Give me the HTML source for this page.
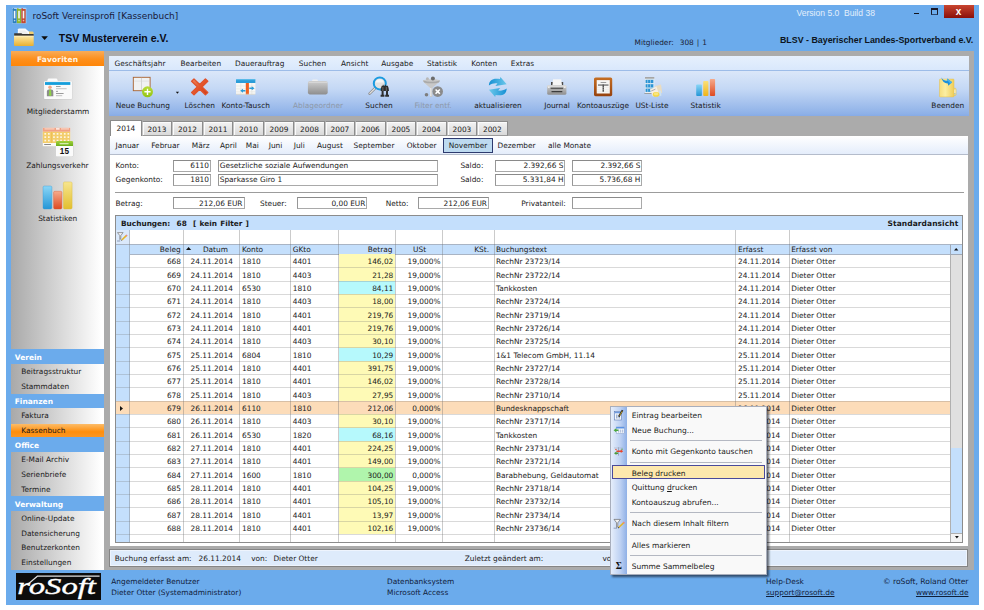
<!DOCTYPE html>
<html lang="de"><head><meta charset="utf-8"><title>roSoft Vereinsprofi [Kassenbuch]</title>
<style>
html,body{margin:0;padding:0;background:#fff;}
body{width:984px;height:610px;position:relative;overflow:hidden;font-family:"DejaVu Sans","Liberation Sans",sans-serif;font-size:7.4px;color:#1a1a1a;}
div{position:absolute;box-sizing:border-box;white-space:nowrap;}
.t{font-size:7.4px;}
.b{font-size:7.5px;font-weight:bold;}
.w{color:#fff;}
.dis{color:#8d98a8;}
svg{position:absolute;overflow:visible;}
u{text-decoration:underline;}
</style></head><body>

<div style="left:6px;top:5px;width:973px;height:600px;background:#6babec;"></div>
<div style="left:104px;top:51px;width:870px;height:519px;background:#ababab;"></div>
<div class="t" style="left:32.5px;top:9px;height:14px;line-height:14px;font-size:8.95px;color:#1a1a3a;">roSoft Vereinsprofi [Kassenbuch]</div>
<div class="t" style="left:796.5px;top:6px;height:14px;line-height:14px;color:#e4effb;font-size:8.56px;font-family:'Liberation Sans',sans-serif;">Version 5.0&nbsp; Build 38</div>
<div style="left:914px;top:12.5px;width:5px;height:1.6px;background:#14141e;"></div>
<div style="left:931px;top:8px;width:7px;height:7px;border:1px solid #1a1a2a;border-top-width:2px;border-bottom-color:#2c4870;"></div>
<div style="left:944px;top:5px;width:30px;height:13px;background:linear-gradient(#c9452f,#8a0f0a);"></div>
<div class="t" style="left:808.6px;width:300px;text-align:center;top:4.5px;height:14px;line-height:14px;color:#fff;font-weight:bold;font-size:10px;font-family:'Liberation Sans',sans-serif;">x</div>
<div class="t" style="left:58.7px;top:30px;height:16px;line-height:16px;font-family:'Liberation Sans',sans-serif;font-weight:bold;font-size:10.56px;color:#0a0a14;">TSV Musterverein e.V.</div>
<div class="t" style="left:634.5px;top:36px;height:13px;line-height:13px;color:#1a2236;word-spacing:0.6px;">Mitglieder:&nbsp; 308 | 1</div>
<div class="t" style="right:10.700000000000045px;text-align:right;top:33px;height:14px;line-height:14px;font-family:'Liberation Sans',sans-serif;font-weight:bold;font-size:8.85px;color:#0c1420;">BLSV - Bayerischer Landes-Sportverband e.V.</div>
<div style="left:11px;top:51px;width:93px;height:519px;background:linear-gradient(90deg,#a9a9a9,#ffffff 97%);"></div>
<div style="left:11px;top:51px;width:93px;height:14.5px;background:linear-gradient(#f9ac58,#fd8f1c 55%,#ff8608);"></div>
<div class="b w" style="left:-92.4px;width:300px;text-align:center;top:53px;height:13px;line-height:13px;color:#fff5e6;letter-spacing:0.15px;">Favoriten</div>
<div class="t" style="left:-92px;width:300px;text-align:center;top:105px;height:13px;line-height:13px;">Mitgliederstamm</div>
<div class="t" style="left:-92.6px;width:300px;text-align:center;top:159px;height:13px;line-height:13px;">Zahlungsverkehr</div>
<div class="t" style="left:-92.3px;width:300px;text-align:center;top:212px;height:13px;line-height:13px;">Statistiken</div>
<div style="left:11px;top:349.4px;width:93px;height:14.7px;background:#6babec;"></div>
<div class="b w" style="left:14.75px;top:351px;height:13px;line-height:13px;">Verein</div>
<div class="t" style="left:21.25px;top:365px;height:13px;line-height:13px;">Beitragsstruktur</div>
<div class="t" style="left:21.25px;top:380px;height:13px;line-height:13px;">Stammdaten</div>
<div style="left:11px;top:394.0px;width:93px;height:14.1px;background:#6babec;"></div>
<div class="b w" style="left:14.75px;top:395px;height:13px;line-height:13px;">Finanzen</div>
<div class="t" style="left:21.25px;top:409px;height:13px;line-height:13px;">Faktura</div>
<div style="left:11px;top:423.75px;width:93px;height:13.35px;background:linear-gradient(#fcbc68,#ff8e0c 60%,#fb9622);"></div>
<div class="t" style="left:21.25px;top:424px;height:13px;line-height:13px;">Kassenbuch</div>
<div style="left:11px;top:437.1px;width:93px;height:15.0px;background:#6babec;"></div>
<div class="b w" style="left:14.75px;top:439px;height:13px;line-height:13px;">Office</div>
<div class="t" style="left:21.25px;top:453px;height:13px;line-height:13px;">E-Mail Archiv</div>
<div class="t" style="left:21.25px;top:468px;height:13px;line-height:13px;">Serienbriefe</div>
<div class="t" style="left:21.25px;top:483px;height:13px;line-height:13px;">Termine</div>
<div style="left:11px;top:496.0px;width:93px;height:14.9px;background:#6babec;"></div>
<div class="b w" style="left:14.75px;top:498px;height:13px;line-height:13px;">Verwaltung</div>
<div class="t" style="left:21.25px;top:512px;height:13px;line-height:13px;">Online-Update</div>
<div class="t" style="left:21.25px;top:527px;height:13px;line-height:13px;">Datensicherung</div>
<div class="t" style="left:21.25px;top:541px;height:13px;line-height:13px;">Benutzerkonten</div>
<div class="t" style="left:21.25px;top:556px;height:13px;line-height:13px;">Einstellungen</div>
<div style="left:109px;top:55.5px;width:860px;height:15.5px;background:linear-gradient(#e6f0fd,#d9e8fc);border-bottom:1px solid #9dbce8;"></div>
<div class="t" style="left:114.5px;top:57px;height:13px;line-height:13px;">Geschäftsjahr</div>
<div class="t" style="left:180.5px;top:57px;height:13px;line-height:13px;">Bearbeiten</div>
<div class="t" style="left:235px;top:57px;height:13px;line-height:13px;">Dauerauftrag</div>
<div class="t" style="left:298.75px;top:57px;height:13px;line-height:13px;">Suchen</div>
<div class="t" style="left:341px;top:57px;height:13px;line-height:13px;">Ansicht</div>
<div class="t" style="left:381.25px;top:57px;height:13px;line-height:13px;">Ausgabe</div>
<div class="t" style="left:427px;top:57px;height:13px;line-height:13px;">Statistik</div>
<div class="t" style="left:471.25px;top:57px;height:13px;line-height:13px;">Konten</div>
<div class="t" style="left:510.75px;top:57px;height:13px;line-height:13px;">Extras</div>
<div style="left:109px;top:71px;width:860px;height:44.7px;background:linear-gradient(#dbe7f9,#c4d8f5 40%,#8eb1e8 95%,#86abe6);"></div>
<div class="t" style="left:-7.25px;width:300px;text-align:center;top:99px;height:13px;line-height:13px;">Neue Buchung</div>
<div class="t" style="left:49.75px;width:300px;text-align:center;top:99px;height:13px;line-height:13px;">Löschen</div>
<div class="t" style="left:95.75px;width:300px;text-align:center;top:99px;height:13px;line-height:13px;">Konto-Tausch</div>
<div class="t dis" style="left:168px;width:300px;text-align:center;top:99px;height:13px;line-height:13px;">Ablageordner</div>
<div class="t" style="left:229px;width:300px;text-align:center;top:99px;height:13px;line-height:13px;">Suchen</div>
<div class="t dis" style="left:283px;width:300px;text-align:center;top:99px;height:13px;line-height:13px;">Filter entf.</div>
<div class="t" style="left:348px;width:300px;text-align:center;top:99px;height:13px;line-height:13px;">aktualisieren</div>
<div class="t" style="left:407px;width:300px;text-align:center;top:99px;height:13px;line-height:13px;">Journal</div>
<div class="t" style="left:453px;width:300px;text-align:center;top:99px;height:13px;line-height:13px;">Kontoauszüge</div>
<div class="t" style="left:502px;width:300px;text-align:center;top:99px;height:13px;line-height:13px;">USt-Liste</div>
<div class="t" style="left:555.6px;width:300px;text-align:center;top:99px;height:13px;line-height:13px;">Statistik</div>
<div class="t" style="left:797.75px;width:300px;text-align:center;top:99px;height:13px;line-height:13px;">Beenden</div>
<div style="left:110px;top:135.5px;width:858px;height:410.5px;background:#fff;"></div>
<div style="left:110px;top:120px;width:32px;height:16.5px;background:#fff;border:1px solid #8a8a8a;border-bottom:none;border-radius:1px 1px 0 0;"></div>
<div class="t" style="left:-24.099999999999994px;width:300px;text-align:center;top:122px;height:13px;line-height:13px;">2014</div>
<div style="left:141.75px;top:121px;width:30.49px;height:14.5px;background:linear-gradient(#f3f3f3,#d9d9d9);border:1px solid #8c8c8c;border-left-color:#c4c4c4;border-bottom-color:#9a9a9a;box-shadow:inset 1px 1px 0 #fbfbfb;"></div>
<div class="t" style="left:6.9950000000000045px;width:300px;text-align:center;top:123px;height:13px;line-height:13px;">2013</div>
<div style="left:172.24px;top:121px;width:30.49px;height:14.5px;background:linear-gradient(#f3f3f3,#d9d9d9);border:1px solid #8c8c8c;border-left-color:#c4c4c4;border-bottom-color:#9a9a9a;box-shadow:inset 1px 1px 0 #fbfbfb;"></div>
<div class="t" style="left:37.485000000000014px;width:300px;text-align:center;top:123px;height:13px;line-height:13px;">2012</div>
<div style="left:202.73px;top:121px;width:30.49px;height:14.5px;background:linear-gradient(#f3f3f3,#d9d9d9);border:1px solid #8c8c8c;border-left-color:#c4c4c4;border-bottom-color:#9a9a9a;box-shadow:inset 1px 1px 0 #fbfbfb;"></div>
<div class="t" style="left:67.975px;width:300px;text-align:center;top:123px;height:13px;line-height:13px;">2011</div>
<div style="left:233.22px;top:121px;width:30.49px;height:14.5px;background:linear-gradient(#f3f3f3,#d9d9d9);border:1px solid #8c8c8c;border-left-color:#c4c4c4;border-bottom-color:#9a9a9a;box-shadow:inset 1px 1px 0 #fbfbfb;"></div>
<div class="t" style="left:98.46499999999997px;width:300px;text-align:center;top:123px;height:13px;line-height:13px;">2010</div>
<div style="left:263.71px;top:121px;width:30.49px;height:14.5px;background:linear-gradient(#f3f3f3,#d9d9d9);border:1px solid #8c8c8c;border-left-color:#c4c4c4;border-bottom-color:#9a9a9a;box-shadow:inset 1px 1px 0 #fbfbfb;"></div>
<div class="t" style="left:128.95499999999998px;width:300px;text-align:center;top:123px;height:13px;line-height:13px;">2009</div>
<div style="left:294.2px;top:121px;width:30.49px;height:14.5px;background:linear-gradient(#f3f3f3,#d9d9d9);border:1px solid #8c8c8c;border-left-color:#c4c4c4;border-bottom-color:#9a9a9a;box-shadow:inset 1px 1px 0 #fbfbfb;"></div>
<div class="t" style="left:159.445px;width:300px;text-align:center;top:123px;height:13px;line-height:13px;">2008</div>
<div style="left:324.69px;top:121px;width:30.49px;height:14.5px;background:linear-gradient(#f3f3f3,#d9d9d9);border:1px solid #8c8c8c;border-left-color:#c4c4c4;border-bottom-color:#9a9a9a;box-shadow:inset 1px 1px 0 #fbfbfb;"></div>
<div class="t" style="left:189.935px;width:300px;text-align:center;top:123px;height:13px;line-height:13px;">2007</div>
<div style="left:355.18px;top:121px;width:30.49px;height:14.5px;background:linear-gradient(#f3f3f3,#d9d9d9);border:1px solid #8c8c8c;border-left-color:#c4c4c4;border-bottom-color:#9a9a9a;box-shadow:inset 1px 1px 0 #fbfbfb;"></div>
<div class="t" style="left:220.425px;width:300px;text-align:center;top:123px;height:13px;line-height:13px;">2006</div>
<div style="left:385.67px;top:121px;width:30.49px;height:14.5px;background:linear-gradient(#f3f3f3,#d9d9d9);border:1px solid #8c8c8c;border-left-color:#c4c4c4;border-bottom-color:#9a9a9a;box-shadow:inset 1px 1px 0 #fbfbfb;"></div>
<div class="t" style="left:250.91500000000002px;width:300px;text-align:center;top:123px;height:13px;line-height:13px;">2005</div>
<div style="left:416.16px;top:121px;width:30.49px;height:14.5px;background:linear-gradient(#f3f3f3,#d9d9d9);border:1px solid #8c8c8c;border-left-color:#c4c4c4;border-bottom-color:#9a9a9a;box-shadow:inset 1px 1px 0 #fbfbfb;"></div>
<div class="t" style="left:281.405px;width:300px;text-align:center;top:123px;height:13px;line-height:13px;">2004</div>
<div style="left:446.65px;top:121px;width:30.49px;height:14.5px;background:linear-gradient(#f3f3f3,#d9d9d9);border:1px solid #8c8c8c;border-left-color:#c4c4c4;border-bottom-color:#9a9a9a;box-shadow:inset 1px 1px 0 #fbfbfb;"></div>
<div class="t" style="left:311.895px;width:300px;text-align:center;top:123px;height:13px;line-height:13px;">2003</div>
<div style="left:477.14px;top:121px;width:30.49px;height:14.5px;background:linear-gradient(#f3f3f3,#d9d9d9);border:1px solid #8c8c8c;border-left-color:#c4c4c4;border-bottom-color:#9a9a9a;box-shadow:inset 1px 1px 0 #fbfbfb;"></div>
<div class="t" style="left:342.385px;width:300px;text-align:center;top:123px;height:13px;line-height:13px;">2002</div>
<div style="left:110px;top:135.5px;width:858px;height:19.5px;background:linear-gradient(#ffffff,#e4edfb);border-bottom:1px solid #b4bccb;"></div>
<div style="left:443px;top:137.5px;width:50px;height:15.5px;background:#bddaf0;border:1px solid #2d3a6e;"></div>
<div class="t" style="left:115.5px;top:139px;height:13px;line-height:13px;">Januar</div>
<div class="t" style="left:151.25px;top:139px;height:13px;line-height:13px;">Februar</div>
<div class="t" style="left:191.75px;top:139px;height:13px;line-height:13px;">März</div>
<div class="t" style="left:220px;top:139px;height:13px;line-height:13px;">April</div>
<div class="t" style="left:245.75px;top:139px;height:13px;line-height:13px;">Mai</div>
<div class="t" style="left:268.75px;top:139px;height:13px;line-height:13px;">Juni</div>
<div class="t" style="left:293.75px;top:139px;height:13px;line-height:13px;">Juli</div>
<div class="t" style="left:317px;top:139px;height:13px;line-height:13px;">August</div>
<div class="t" style="left:353.6px;top:139px;height:13px;line-height:13px;">September</div>
<div class="t" style="left:406.7px;top:139px;height:13px;line-height:13px;">Oktober</div>
<div class="t" style="left:448.8px;top:139px;height:13px;line-height:13px;">November</div>
<div class="t" style="left:497.5px;top:139px;height:13px;line-height:13px;">Dezember</div>
<div class="t" style="left:547.9px;top:139px;height:13px;line-height:13px;">alle Monate</div>
<div class="t" style="left:115.5px;top:159px;height:13px;line-height:13px;">Konto:</div>
<div class="t" style="left:115.5px;top:173px;height:13px;line-height:13px;">Gegenkonto:</div>
<div style="left:173px;top:160px;width:38px;height:12px;background:#fff;border:1px solid #a9a9a9;border-top-color:#8a8a8a;border-left-color:#979797;"></div>
<div class="t" style="right:775px;text-align:right;top:159px;height:13px;line-height:13px;">6110</div>
<div style="left:217.5px;top:160px;width:220.0px;height:12px;background:#fff;border:1px solid #a9a9a9;border-top-color:#8a8a8a;border-left-color:#979797;"></div>
<div class="t" style="left:219.7px;top:159px;height:13px;line-height:13px;">Gesetzliche soziale Aufwendungen</div>
<div style="left:173px;top:174px;width:38px;height:12px;background:#fff;border:1px solid #a9a9a9;border-top-color:#8a8a8a;border-left-color:#979797;"></div>
<div class="t" style="right:775px;text-align:right;top:173px;height:13px;line-height:13px;">1810</div>
<div style="left:217.5px;top:174px;width:220.0px;height:12px;background:#fff;border:1px solid #a9a9a9;border-top-color:#8a8a8a;border-left-color:#979797;"></div>
<div class="t" style="left:219.7px;top:173px;height:13px;line-height:13px;">Sparkasse Giro 1</div>
<div class="t" style="left:460.4px;top:159px;height:13px;line-height:13px;">Saldo:</div>
<div class="t" style="left:460.4px;top:173px;height:13px;line-height:13px;">Saldo:</div>
<div style="left:495.4px;top:160px;width:70.10000000000002px;height:12px;background:#fff;border:1px solid #a9a9a9;border-top-color:#8a8a8a;border-left-color:#979797;"></div>
<div class="t" style="right:420.5px;text-align:right;top:159px;height:13px;line-height:13px;">2.392,66 S</div>
<div style="left:572.3px;top:160px;width:70.10000000000002px;height:12px;background:#fff;border:1px solid #a9a9a9;border-top-color:#8a8a8a;border-left-color:#979797;"></div>
<div class="t" style="right:343.6px;text-align:right;top:159px;height:13px;line-height:13px;">2.392,66 S</div>
<div style="left:495.4px;top:174px;width:70.10000000000002px;height:12px;background:#fff;border:1px solid #a9a9a9;border-top-color:#8a8a8a;border-left-color:#979797;"></div>
<div class="t" style="right:420.5px;text-align:right;top:173px;height:13px;line-height:13px;">5.331,84 H</div>
<div style="left:572.3px;top:174px;width:70.10000000000002px;height:12px;background:#fff;border:1px solid #a9a9a9;border-top-color:#8a8a8a;border-left-color:#979797;"></div>
<div class="t" style="right:343.6px;text-align:right;top:173px;height:13px;line-height:13px;">5.736,68 H</div>
<div style="left:115px;top:192px;width:848.5px;height:1px;background:#9c9c9c;"></div>
<div class="t" style="left:115.5px;top:197px;height:13px;line-height:13px;">Betrag:</div>
<div style="left:173px;top:197px;width:71.5px;height:12px;background:#fff;border:1px solid #a9a9a9;border-top-color:#8a8a8a;border-left-color:#979797;"></div>
<div class="t" style="right:741.5px;text-align:right;top:197px;height:13px;line-height:13px;">212,06 EUR</div>
<div class="t" style="left:260px;top:197px;height:13px;line-height:13px;">Steuer:</div>
<div style="left:297.3px;top:197px;width:70.09999999999997px;height:12px;background:#fff;border:1px solid #a9a9a9;border-top-color:#8a8a8a;border-left-color:#979797;"></div>
<div class="t" style="right:618.6px;text-align:right;top:197px;height:13px;line-height:13px;">0,00 EUR</div>
<div class="t" style="left:385.7px;top:197px;height:13px;line-height:13px;">Netto:</div>
<div style="left:418.3px;top:197px;width:70.69999999999999px;height:12px;background:#fff;border:1px solid #a9a9a9;border-top-color:#8a8a8a;border-left-color:#979797;"></div>
<div class="t" style="right:497px;text-align:right;top:197px;height:13px;line-height:13px;">212,06 EUR</div>
<div class="t" style="left:521.3px;top:197px;height:13px;line-height:13px;">Privatanteil:</div>
<div style="left:572.3px;top:197px;width:70.10000000000002px;height:12px;background:#fff;border:1px solid #a9a9a9;border-top-color:#8a8a8a;border-left-color:#979797;"></div>
<div style="left:115px;top:215px;width:848px;height:328px;background:#fff;border:1px solid #8c8c8c;"></div>
<div style="left:116px;top:216px;width:846px;height:13.5px;background:#c4dffc;"></div>
<div class="b" style="left:121px;top:217px;height:13px;line-height:13px;word-spacing:0.6px;font-size:7.35px;">Buchungen:&nbsp; 68&nbsp; [ kein Filter ]</div>
<div class="b" style="right:25.700000000000045px;text-align:right;top:217px;height:13px;line-height:13px;letter-spacing:0.07px;">Standardansicht</div>
<div style="left:116px;top:229.75px;width:13.5px;height:13.75px;background:#dbe9fb;"></div>
<div style="left:116px;top:243.5px;width:846px;height:11px;background:#c4dffc;border-top:1px solid #a9b4c4;border-bottom:1px solid #a9b4c4;"></div>
<div style="left:116px;top:254.4px;width:13.5px;height:287.6px;background:#c4dffc;"></div>
<div class="t" style="right:803.3px;text-align:right;top:243px;height:13px;line-height:13px;">Beleg</div>
<div class="t" style="left:65.4px;width:300px;text-align:center;top:243px;height:13px;line-height:13px;">Datum</div>
<svg style="left:185.8px;top:247.4px" width="5.2" height="3"><path d="M0 3H5.2L2.6 0Z" fill="#111"/></svg>
<div class="t" style="left:242px;top:243px;height:13px;line-height:13px;">Konto</div>
<div class="t" style="left:292.7px;top:243px;height:13px;line-height:13px;">GKto</div>
<div class="t" style="right:591.6px;text-align:right;top:243px;height:13px;line-height:13px;">Betrag</div>
<div class="t" style="left:269.6px;width:300px;text-align:center;top:243px;height:13px;line-height:13px;">USt</div>
<div class="t" style="right:495px;text-align:right;top:243px;height:13px;line-height:13px;">KSt.</div>
<div class="t" style="left:495.9px;top:243px;height:13px;line-height:13px;">Buchungstext</div>
<div class="t" style="left:738px;top:243px;height:13px;line-height:13px;">Erfasst</div>
<div class="t" style="left:791.2px;top:243px;height:13px;line-height:13px;">Erfasst von</div>
<div style="left:338.75px;top:254.4px;width:56.25px;height:13.335px;background:#fefab6;"></div>
<div class="t" style="right:803px;text-align:right;top:255px;height:13px;line-height:13px;">668</div>
<div class="t" style="left:61.75px;width:300px;text-align:center;top:255px;height:13px;line-height:13px;">24.11.2014</div>
<div class="t" style="left:242px;top:255px;height:13px;line-height:13px;">1810</div>
<div class="t" style="left:292.7px;top:255px;height:13px;line-height:13px;">4401</div>
<div class="t" style="right:590.7px;text-align:right;top:255px;height:13px;line-height:13px;">146,02</div>
<div class="t" style="right:543.6px;text-align:right;top:255px;height:13px;line-height:13px;">19,000%</div>
<div class="t" style="left:495.9px;top:255px;height:13px;line-height:13px;">RechNr 23723/14</div>
<div class="t" style="left:738px;top:255px;height:13px;line-height:13px;">24.11.2014</div>
<div class="t" style="left:791.2px;top:255px;height:13px;line-height:13px;">Dieter Otter</div>
<div style="left:338.75px;top:267.74px;width:56.25px;height:13.335px;background:#fefab6;"></div>
<div class="t" style="right:803px;text-align:right;top:269px;height:13px;line-height:13px;">669</div>
<div class="t" style="left:61.75px;width:300px;text-align:center;top:269px;height:13px;line-height:13px;">24.11.2014</div>
<div class="t" style="left:242px;top:269px;height:13px;line-height:13px;">1810</div>
<div class="t" style="left:292.7px;top:269px;height:13px;line-height:13px;">4403</div>
<div class="t" style="right:590.7px;text-align:right;top:269px;height:13px;line-height:13px;">21,28</div>
<div class="t" style="right:543.6px;text-align:right;top:269px;height:13px;line-height:13px;">19,000%</div>
<div class="t" style="left:495.9px;top:269px;height:13px;line-height:13px;">RechNr 23722/14</div>
<div class="t" style="left:738px;top:269px;height:13px;line-height:13px;">24.11.2014</div>
<div class="t" style="left:791.2px;top:269px;height:13px;line-height:13px;">Dieter Otter</div>
<div style="left:338.75px;top:281.07px;width:56.25px;height:13.335px;background:#b6f9fc;"></div>
<div class="t" style="right:803px;text-align:right;top:282px;height:13px;line-height:13px;">670</div>
<div class="t" style="left:61.75px;width:300px;text-align:center;top:282px;height:13px;line-height:13px;">24.11.2014</div>
<div class="t" style="left:242px;top:282px;height:13px;line-height:13px;">6530</div>
<div class="t" style="left:292.7px;top:282px;height:13px;line-height:13px;">1810</div>
<div class="t" style="right:590.7px;text-align:right;top:282px;height:13px;line-height:13px;">84,11</div>
<div class="t" style="right:543.6px;text-align:right;top:282px;height:13px;line-height:13px;">19,000%</div>
<div class="t" style="left:495.9px;top:282px;height:13px;line-height:13px;">Tankkosten</div>
<div class="t" style="left:738px;top:282px;height:13px;line-height:13px;">24.11.2014</div>
<div class="t" style="left:791.2px;top:282px;height:13px;line-height:13px;">Dieter Otter</div>
<div style="left:338.75px;top:294.41px;width:56.25px;height:13.335px;background:#fefab6;"></div>
<div class="t" style="right:803px;text-align:right;top:295px;height:13px;line-height:13px;">671</div>
<div class="t" style="left:61.75px;width:300px;text-align:center;top:295px;height:13px;line-height:13px;">24.11.2014</div>
<div class="t" style="left:242px;top:295px;height:13px;line-height:13px;">1810</div>
<div class="t" style="left:292.7px;top:295px;height:13px;line-height:13px;">4403</div>
<div class="t" style="right:590.7px;text-align:right;top:295px;height:13px;line-height:13px;">18,00</div>
<div class="t" style="right:543.6px;text-align:right;top:295px;height:13px;line-height:13px;">19,000%</div>
<div class="t" style="left:495.9px;top:295px;height:13px;line-height:13px;">RechNr 23724/14</div>
<div class="t" style="left:738px;top:295px;height:13px;line-height:13px;">24.11.2014</div>
<div class="t" style="left:791.2px;top:295px;height:13px;line-height:13px;">Dieter Otter</div>
<div style="left:338.75px;top:307.74px;width:56.25px;height:13.335px;background:#fefab6;"></div>
<div class="t" style="right:803px;text-align:right;top:309px;height:13px;line-height:13px;">672</div>
<div class="t" style="left:61.75px;width:300px;text-align:center;top:309px;height:13px;line-height:13px;">24.11.2014</div>
<div class="t" style="left:242px;top:309px;height:13px;line-height:13px;">1810</div>
<div class="t" style="left:292.7px;top:309px;height:13px;line-height:13px;">4401</div>
<div class="t" style="right:590.7px;text-align:right;top:309px;height:13px;line-height:13px;">219,76</div>
<div class="t" style="right:543.6px;text-align:right;top:309px;height:13px;line-height:13px;">19,000%</div>
<div class="t" style="left:495.9px;top:309px;height:13px;line-height:13px;">RechNr 23719/14</div>
<div class="t" style="left:738px;top:309px;height:13px;line-height:13px;">24.11.2014</div>
<div class="t" style="left:791.2px;top:309px;height:13px;line-height:13px;">Dieter Otter</div>
<div style="left:338.75px;top:321.08px;width:56.25px;height:13.335px;background:#fefab6;"></div>
<div class="t" style="right:803px;text-align:right;top:322px;height:13px;line-height:13px;">673</div>
<div class="t" style="left:61.75px;width:300px;text-align:center;top:322px;height:13px;line-height:13px;">24.11.2014</div>
<div class="t" style="left:242px;top:322px;height:13px;line-height:13px;">1810</div>
<div class="t" style="left:292.7px;top:322px;height:13px;line-height:13px;">4401</div>
<div class="t" style="right:590.7px;text-align:right;top:322px;height:13px;line-height:13px;">219,76</div>
<div class="t" style="right:543.6px;text-align:right;top:322px;height:13px;line-height:13px;">19,000%</div>
<div class="t" style="left:495.9px;top:322px;height:13px;line-height:13px;">RechNr 23726/14</div>
<div class="t" style="left:738px;top:322px;height:13px;line-height:13px;">24.11.2014</div>
<div class="t" style="left:791.2px;top:322px;height:13px;line-height:13px;">Dieter Otter</div>
<div style="left:338.75px;top:334.41px;width:56.25px;height:13.335px;background:#fefab6;"></div>
<div class="t" style="right:803px;text-align:right;top:335px;height:13px;line-height:13px;">674</div>
<div class="t" style="left:61.75px;width:300px;text-align:center;top:335px;height:13px;line-height:13px;">24.11.2014</div>
<div class="t" style="left:242px;top:335px;height:13px;line-height:13px;">1810</div>
<div class="t" style="left:292.7px;top:335px;height:13px;line-height:13px;">4403</div>
<div class="t" style="right:590.7px;text-align:right;top:335px;height:13px;line-height:13px;">30,10</div>
<div class="t" style="right:543.6px;text-align:right;top:335px;height:13px;line-height:13px;">19,000%</div>
<div class="t" style="left:495.9px;top:335px;height:13px;line-height:13px;">RechNr 23725/14</div>
<div class="t" style="left:738px;top:335px;height:13px;line-height:13px;">24.11.2014</div>
<div class="t" style="left:791.2px;top:335px;height:13px;line-height:13px;">Dieter Otter</div>
<div style="left:338.75px;top:347.75px;width:56.25px;height:13.335px;background:#b6f9fc;"></div>
<div class="t" style="right:803px;text-align:right;top:349px;height:13px;line-height:13px;">675</div>
<div class="t" style="left:61.75px;width:300px;text-align:center;top:349px;height:13px;line-height:13px;">25.11.2014</div>
<div class="t" style="left:242px;top:349px;height:13px;line-height:13px;">6804</div>
<div class="t" style="left:292.7px;top:349px;height:13px;line-height:13px;">1810</div>
<div class="t" style="right:590.7px;text-align:right;top:349px;height:13px;line-height:13px;">10,29</div>
<div class="t" style="right:543.6px;text-align:right;top:349px;height:13px;line-height:13px;">19,000%</div>
<div class="t" style="left:495.9px;top:349px;height:13px;line-height:13px;">1&amp;1 Telecom GmbH, 11.14</div>
<div class="t" style="left:738px;top:349px;height:13px;line-height:13px;">25.11.2014</div>
<div class="t" style="left:791.2px;top:349px;height:13px;line-height:13px;">Dieter Otter</div>
<div style="left:338.75px;top:361.08px;width:56.25px;height:13.335px;background:#fefab6;"></div>
<div class="t" style="right:803px;text-align:right;top:362px;height:13px;line-height:13px;">676</div>
<div class="t" style="left:61.75px;width:300px;text-align:center;top:362px;height:13px;line-height:13px;">25.11.2014</div>
<div class="t" style="left:242px;top:362px;height:13px;line-height:13px;">1810</div>
<div class="t" style="left:292.7px;top:362px;height:13px;line-height:13px;">4401</div>
<div class="t" style="right:590.7px;text-align:right;top:362px;height:13px;line-height:13px;">391,75</div>
<div class="t" style="right:543.6px;text-align:right;top:362px;height:13px;line-height:13px;">19,000%</div>
<div class="t" style="left:495.9px;top:362px;height:13px;line-height:13px;">RechNr 23727/14</div>
<div class="t" style="left:738px;top:362px;height:13px;line-height:13px;">25.11.2014</div>
<div class="t" style="left:791.2px;top:362px;height:13px;line-height:13px;">Dieter Otter</div>
<div style="left:338.75px;top:374.42px;width:56.25px;height:13.335px;background:#fefab6;"></div>
<div class="t" style="right:803px;text-align:right;top:375px;height:13px;line-height:13px;">677</div>
<div class="t" style="left:61.75px;width:300px;text-align:center;top:375px;height:13px;line-height:13px;">25.11.2014</div>
<div class="t" style="left:242px;top:375px;height:13px;line-height:13px;">1810</div>
<div class="t" style="left:292.7px;top:375px;height:13px;line-height:13px;">4401</div>
<div class="t" style="right:590.7px;text-align:right;top:375px;height:13px;line-height:13px;">146,02</div>
<div class="t" style="right:543.6px;text-align:right;top:375px;height:13px;line-height:13px;">19,000%</div>
<div class="t" style="left:495.9px;top:375px;height:13px;line-height:13px;">RechNr 23728/14</div>
<div class="t" style="left:738px;top:375px;height:13px;line-height:13px;">25.11.2014</div>
<div class="t" style="left:791.2px;top:375px;height:13px;line-height:13px;">Dieter Otter</div>
<div style="left:338.75px;top:387.75px;width:56.25px;height:13.335px;background:#fefab6;"></div>
<div class="t" style="right:803px;text-align:right;top:389px;height:13px;line-height:13px;">678</div>
<div class="t" style="left:61.75px;width:300px;text-align:center;top:389px;height:13px;line-height:13px;">25.11.2014</div>
<div class="t" style="left:242px;top:389px;height:13px;line-height:13px;">1810</div>
<div class="t" style="left:292.7px;top:389px;height:13px;line-height:13px;">4403</div>
<div class="t" style="right:590.7px;text-align:right;top:389px;height:13px;line-height:13px;">27,95</div>
<div class="t" style="right:543.6px;text-align:right;top:389px;height:13px;line-height:13px;">19,000%</div>
<div class="t" style="left:495.9px;top:389px;height:13px;line-height:13px;">RechNr 23710/14</div>
<div class="t" style="left:738px;top:389px;height:13px;line-height:13px;">25.11.2014</div>
<div class="t" style="left:791.2px;top:389px;height:13px;line-height:13px;">Dieter Otter</div>
<div style="left:116px;top:401.09px;width:834.4px;height:13.335px;background:#fcdcb9;"></div>
<svg style="left:120px;top:405.69px" width="3" height="5"><path d="M0 0V5L3 2.5Z" fill="#111"/></svg>
<div class="t" style="right:803px;text-align:right;top:402px;height:13px;line-height:13px;">679</div>
<div class="t" style="left:61.75px;width:300px;text-align:center;top:402px;height:13px;line-height:13px;">26.11.2014</div>
<div class="t" style="left:242px;top:402px;height:13px;line-height:13px;">6110</div>
<div class="t" style="left:292.7px;top:402px;height:13px;line-height:13px;">1810</div>
<div class="t" style="right:590.7px;text-align:right;top:402px;height:13px;line-height:13px;">212,06</div>
<div class="t" style="right:543.6px;text-align:right;top:402px;height:13px;line-height:13px;">0,000%</div>
<div class="t" style="left:495.9px;top:402px;height:13px;line-height:13px;">Bundesknappschaft</div>
<div class="t" style="left:738px;top:402px;height:13px;line-height:13px;">26.11.2014</div>
<div class="t" style="left:791.2px;top:402px;height:13px;line-height:13px;">Dieter Otter</div>
<div style="left:338.75px;top:414.42px;width:56.25px;height:13.335px;background:#fefab6;"></div>
<div class="t" style="right:803px;text-align:right;top:415px;height:13px;line-height:13px;">680</div>
<div class="t" style="left:61.75px;width:300px;text-align:center;top:415px;height:13px;line-height:13px;">26.11.2014</div>
<div class="t" style="left:242px;top:415px;height:13px;line-height:13px;">1810</div>
<div class="t" style="left:292.7px;top:415px;height:13px;line-height:13px;">4403</div>
<div class="t" style="right:590.7px;text-align:right;top:415px;height:13px;line-height:13px;">30,10</div>
<div class="t" style="right:543.6px;text-align:right;top:415px;height:13px;line-height:13px;">19,000%</div>
<div class="t" style="left:495.9px;top:415px;height:13px;line-height:13px;">RechNr 23717/14</div>
<div class="t" style="left:738px;top:415px;height:13px;line-height:13px;">26.11.2014</div>
<div class="t" style="left:791.2px;top:415px;height:13px;line-height:13px;">Dieter Otter</div>
<div style="left:338.75px;top:427.75px;width:56.25px;height:13.335px;background:#b6f9fc;"></div>
<div class="t" style="right:803px;text-align:right;top:429px;height:13px;line-height:13px;">681</div>
<div class="t" style="left:61.75px;width:300px;text-align:center;top:429px;height:13px;line-height:13px;">26.11.2014</div>
<div class="t" style="left:242px;top:429px;height:13px;line-height:13px;">6530</div>
<div class="t" style="left:292.7px;top:429px;height:13px;line-height:13px;">1820</div>
<div class="t" style="right:590.7px;text-align:right;top:429px;height:13px;line-height:13px;">68,16</div>
<div class="t" style="right:543.6px;text-align:right;top:429px;height:13px;line-height:13px;">19,000%</div>
<div class="t" style="left:495.9px;top:429px;height:13px;line-height:13px;">Tankkosten</div>
<div class="t" style="left:738px;top:429px;height:13px;line-height:13px;">26.11.2014</div>
<div class="t" style="left:791.2px;top:429px;height:13px;line-height:13px;">Dieter Otter</div>
<div style="left:338.75px;top:441.09px;width:56.25px;height:13.335px;background:#fefab6;"></div>
<div class="t" style="right:803px;text-align:right;top:442px;height:13px;line-height:13px;">682</div>
<div class="t" style="left:61.75px;width:300px;text-align:center;top:442px;height:13px;line-height:13px;">27.11.2014</div>
<div class="t" style="left:242px;top:442px;height:13px;line-height:13px;">1810</div>
<div class="t" style="left:292.7px;top:442px;height:13px;line-height:13px;">4401</div>
<div class="t" style="right:590.7px;text-align:right;top:442px;height:13px;line-height:13px;">224,25</div>
<div class="t" style="right:543.6px;text-align:right;top:442px;height:13px;line-height:13px;">19,000%</div>
<div class="t" style="left:495.9px;top:442px;height:13px;line-height:13px;">RechNr 23731/14</div>
<div class="t" style="left:738px;top:442px;height:13px;line-height:13px;">27.11.2014</div>
<div class="t" style="left:791.2px;top:442px;height:13px;line-height:13px;">Dieter Otter</div>
<div style="left:338.75px;top:454.43px;width:56.25px;height:13.335px;background:#fefab6;"></div>
<div class="t" style="right:803px;text-align:right;top:455px;height:13px;line-height:13px;">683</div>
<div class="t" style="left:61.75px;width:300px;text-align:center;top:455px;height:13px;line-height:13px;">27.11.2014</div>
<div class="t" style="left:242px;top:455px;height:13px;line-height:13px;">1810</div>
<div class="t" style="left:292.7px;top:455px;height:13px;line-height:13px;">4401</div>
<div class="t" style="right:590.7px;text-align:right;top:455px;height:13px;line-height:13px;">149,00</div>
<div class="t" style="right:543.6px;text-align:right;top:455px;height:13px;line-height:13px;">19,000%</div>
<div class="t" style="left:495.9px;top:455px;height:13px;line-height:13px;">RechNr 23721/14</div>
<div class="t" style="left:738px;top:455px;height:13px;line-height:13px;">27.11.2014</div>
<div class="t" style="left:791.2px;top:455px;height:13px;line-height:13px;">Dieter Otter</div>
<div style="left:338.75px;top:467.76px;width:56.25px;height:13.335px;background:#b0f5ac;"></div>
<div class="t" style="right:803px;text-align:right;top:469px;height:13px;line-height:13px;">684</div>
<div class="t" style="left:61.75px;width:300px;text-align:center;top:469px;height:13px;line-height:13px;">27.11.2014</div>
<div class="t" style="left:242px;top:469px;height:13px;line-height:13px;">1600</div>
<div class="t" style="left:292.7px;top:469px;height:13px;line-height:13px;">1810</div>
<div class="t" style="right:590.7px;text-align:right;top:469px;height:13px;line-height:13px;">300,00</div>
<div class="t" style="right:543.6px;text-align:right;top:469px;height:13px;line-height:13px;">0,000%</div>
<div class="t" style="left:495.9px;top:469px;height:13px;line-height:13px;">Barabhebung, Geldautomat</div>
<div class="t" style="left:738px;top:469px;height:13px;line-height:13px;">27.11.2014</div>
<div class="t" style="left:791.2px;top:469px;height:13px;line-height:13px;">Dieter Otter</div>
<div style="left:338.75px;top:481.1px;width:56.25px;height:13.335px;background:#fefab6;"></div>
<div class="t" style="right:803px;text-align:right;top:482px;height:13px;line-height:13px;">685</div>
<div class="t" style="left:61.75px;width:300px;text-align:center;top:482px;height:13px;line-height:13px;">28.11.2014</div>
<div class="t" style="left:242px;top:482px;height:13px;line-height:13px;">1810</div>
<div class="t" style="left:292.7px;top:482px;height:13px;line-height:13px;">4401</div>
<div class="t" style="right:590.7px;text-align:right;top:482px;height:13px;line-height:13px;">104,25</div>
<div class="t" style="right:543.6px;text-align:right;top:482px;height:13px;line-height:13px;">19,000%</div>
<div class="t" style="left:495.9px;top:482px;height:13px;line-height:13px;">RechNr 23718/14</div>
<div class="t" style="left:738px;top:482px;height:13px;line-height:13px;">28.11.2014</div>
<div class="t" style="left:791.2px;top:482px;height:13px;line-height:13px;">Dieter Otter</div>
<div style="left:338.75px;top:494.43px;width:56.25px;height:13.335px;background:#fefab6;"></div>
<div class="t" style="right:803px;text-align:right;top:495px;height:13px;line-height:13px;">686</div>
<div class="t" style="left:61.75px;width:300px;text-align:center;top:495px;height:13px;line-height:13px;">28.11.2014</div>
<div class="t" style="left:242px;top:495px;height:13px;line-height:13px;">1810</div>
<div class="t" style="left:292.7px;top:495px;height:13px;line-height:13px;">4401</div>
<div class="t" style="right:590.7px;text-align:right;top:495px;height:13px;line-height:13px;">105,10</div>
<div class="t" style="right:543.6px;text-align:right;top:495px;height:13px;line-height:13px;">19,000%</div>
<div class="t" style="left:495.9px;top:495px;height:13px;line-height:13px;">RechNr 23732/14</div>
<div class="t" style="left:738px;top:495px;height:13px;line-height:13px;">28.11.2014</div>
<div class="t" style="left:791.2px;top:495px;height:13px;line-height:13px;">Dieter Otter</div>
<div style="left:338.75px;top:507.76px;width:56.25px;height:13.335px;background:#fefab6;"></div>
<div class="t" style="right:803px;text-align:right;top:509px;height:13px;line-height:13px;">687</div>
<div class="t" style="left:61.75px;width:300px;text-align:center;top:509px;height:13px;line-height:13px;">28.11.2014</div>
<div class="t" style="left:242px;top:509px;height:13px;line-height:13px;">1810</div>
<div class="t" style="left:292.7px;top:509px;height:13px;line-height:13px;">4401</div>
<div class="t" style="right:590.7px;text-align:right;top:509px;height:13px;line-height:13px;">13,97</div>
<div class="t" style="right:543.6px;text-align:right;top:509px;height:13px;line-height:13px;">19,000%</div>
<div class="t" style="left:495.9px;top:509px;height:13px;line-height:13px;">RechNr 23734/14</div>
<div class="t" style="left:738px;top:509px;height:13px;line-height:13px;">28.11.2014</div>
<div class="t" style="left:791.2px;top:509px;height:13px;line-height:13px;">Dieter Otter</div>
<div style="left:338.75px;top:521.1px;width:56.25px;height:13.335px;background:#fefab6;"></div>
<div class="t" style="right:803px;text-align:right;top:522px;height:13px;line-height:13px;">688</div>
<div class="t" style="left:61.75px;width:300px;text-align:center;top:522px;height:13px;line-height:13px;">28.11.2014</div>
<div class="t" style="left:242px;top:522px;height:13px;line-height:13px;">1810</div>
<div class="t" style="left:292.7px;top:522px;height:13px;line-height:13px;">4401</div>
<div class="t" style="right:590.7px;text-align:right;top:522px;height:13px;line-height:13px;">102,16</div>
<div class="t" style="right:543.6px;text-align:right;top:522px;height:13px;line-height:13px;">19,000%</div>
<div class="t" style="left:495.9px;top:522px;height:13px;line-height:13px;">RechNr 23736/14</div>
<div class="t" style="left:738px;top:522px;height:13px;line-height:13px;">28.11.2014</div>
<div class="t" style="left:791.2px;top:522px;height:13px;line-height:13px;">Dieter Otter</div>
<div style="left:116px;top:267.24px;width:834.4px;height:1px;background:rgba(120,120,120,0.28);"></div>
<div style="left:116px;top:280.57px;width:834.4px;height:1px;background:rgba(120,120,120,0.28);"></div>
<div style="left:116px;top:293.91px;width:834.4px;height:1px;background:rgba(120,120,120,0.28);"></div>
<div style="left:116px;top:307.24px;width:834.4px;height:1px;background:rgba(120,120,120,0.28);"></div>
<div style="left:116px;top:320.58px;width:834.4px;height:1px;background:rgba(120,120,120,0.28);"></div>
<div style="left:116px;top:333.91px;width:834.4px;height:1px;background:rgba(120,120,120,0.28);"></div>
<div style="left:116px;top:347.25px;width:834.4px;height:1px;background:rgba(120,120,120,0.28);"></div>
<div style="left:116px;top:360.58px;width:834.4px;height:1px;background:rgba(120,120,120,0.28);"></div>
<div style="left:116px;top:373.92px;width:834.4px;height:1px;background:rgba(120,120,120,0.28);"></div>
<div style="left:116px;top:387.25px;width:834.4px;height:1px;background:rgba(120,120,120,0.28);"></div>
<div style="left:116px;top:400.59px;width:834.4px;height:1px;background:rgba(120,120,120,0.28);"></div>
<div style="left:116px;top:413.92px;width:834.4px;height:1px;background:rgba(120,120,120,0.28);"></div>
<div style="left:116px;top:427.25px;width:834.4px;height:1px;background:rgba(120,120,120,0.28);"></div>
<div style="left:116px;top:440.59px;width:834.4px;height:1px;background:rgba(120,120,120,0.28);"></div>
<div style="left:116px;top:453.93px;width:834.4px;height:1px;background:rgba(120,120,120,0.28);"></div>
<div style="left:116px;top:467.26px;width:834.4px;height:1px;background:rgba(120,120,120,0.28);"></div>
<div style="left:116px;top:480.6px;width:834.4px;height:1px;background:rgba(120,120,120,0.28);"></div>
<div style="left:116px;top:493.93px;width:834.4px;height:1px;background:rgba(120,120,120,0.28);"></div>
<div style="left:116px;top:507.26px;width:834.4px;height:1px;background:rgba(120,120,120,0.28);"></div>
<div style="left:116px;top:520.6px;width:834.4px;height:1px;background:rgba(120,120,120,0.28);"></div>
<div style="left:116px;top:533.94px;width:834.4px;height:1px;background:rgba(120,120,120,0.28);"></div>
<div style="left:129.0px;top:229.75px;width:1px;height:312.25px;background:rgba(110,110,110,0.36);"></div>
<div style="left:182.75px;top:229.75px;width:1px;height:312.25px;background:rgba(110,110,110,0.36);"></div>
<div style="left:239.0px;top:229.75px;width:1px;height:312.25px;background:rgba(110,110,110,0.36);"></div>
<div style="left:289.5px;top:229.75px;width:1px;height:312.25px;background:rgba(110,110,110,0.36);"></div>
<div style="left:338.25px;top:229.75px;width:1px;height:312.25px;background:rgba(110,110,110,0.36);"></div>
<div style="left:394.5px;top:229.75px;width:1px;height:312.25px;background:rgba(110,110,110,0.36);"></div>
<div style="left:442.0px;top:229.75px;width:1px;height:312.25px;background:rgba(110,110,110,0.36);"></div>
<div style="left:493.5px;top:229.75px;width:1px;height:312.25px;background:rgba(110,110,110,0.36);"></div>
<div style="left:735.1px;top:229.75px;width:1px;height:312.25px;background:rgba(110,110,110,0.36);"></div>
<div style="left:788.5px;top:229.75px;width:1px;height:312.25px;background:rgba(110,110,110,0.36);"></div>
<div style="left:950px;top:243.5px;width:12px;height:298.5px;background:#e0e0e0;border-left:1px solid #b0b0b0;"></div>
<div style="left:950px;top:243.5px;width:12px;height:11px;background:#c4dffc;border-left:1px solid #a0a8b4;border-bottom:1px solid #a0a8b4;border-top:1px solid #a9b4c4;"></div>
<div style="left:951px;top:448px;width:11px;height:85px;background:#c4dffc;"></div>
<div style="left:950px;top:533px;width:12px;height:9px;background:#f4f4f4;border-left:1px solid #b0b0b0;border-top:1px solid #b0b0b0;"></div>
<svg style="left:954.3px;top:247.6px" width="4.4" height="2.6"><path d="M0 2.6H4.4L2.2 0Z" fill="#111"/></svg>
<svg style="left:954.6px;top:536px" width="3.8" height="2.4"><path d="M0 0H3.8L1.9 2.4Z" fill="#111"/></svg>
<div style="left:109px;top:549px;width:859px;height:18px;background:#deebfb;border:1px solid #858585;box-shadow:inset 0 0 0 1px #eef4fd;"></div>
<div class="t" style="left:114.8px;top:552px;height:13px;line-height:13px;">Buchung erfasst am:</div>
<div class="t" style="left:198.6px;top:552px;height:13px;line-height:13px;">26.11.2014</div>
<div class="t" style="left:251.2px;top:552px;height:13px;line-height:13px;">von:</div>
<div class="t" style="left:273.4px;top:552px;height:13px;line-height:13px;">Dieter Otter</div>
<div class="t" style="left:464.7px;top:552px;height:13px;line-height:13px;">Zuletzt geändert am:</div>
<div class="t" style="left:602.5px;top:552px;height:13px;line-height:13px;">von:</div>
<div style="left:16px;top:573px;width:85px;height:26.5px;background:#0c0c0c;"></div>
<svg style="left:16px;top:573px" width="85" height="26.5" viewBox="0 0 85 26.5"><path d="M10.4 11.8L21.2 2.6H83.6V3.7H21.7L11.4 12.4Z" fill="#e0e0e0"/><text x="1.3" y="21" font-family="'Liberation Serif',serif" font-style="italic" font-size="23" fill="#fff" stroke="#fff" stroke-width=".35" textLength="78.6" lengthAdjust="spacingAndGlyphs">roSoft</text></svg>
<div class="t" style="left:111.3px;top:575px;height:13px;line-height:13px;color:#10203a;">Angemeldeter Benutzer</div>
<div class="t" style="left:111.3px;top:586px;height:13px;line-height:13px;color:#10203a;">Dieter Otter (Systemadministrator)</div>
<div class="t" style="left:387px;top:575px;height:13px;line-height:13px;color:#10203a;">Datenbanksystem</div>
<div class="t" style="left:387px;top:586px;height:13px;line-height:13px;color:#10203a;">Microsoft Access</div>
<div class="t" style="left:766px;top:575px;height:13px;line-height:13px;color:#10203a;">Help-Desk</div>
<div class="t" style="left:766px;top:586px;height:13px;line-height:13px;color:#10203a;"><u>support@rosoft.de</u></div>
<div class="t" style="right:15.5px;text-align:right;top:575px;height:13px;line-height:13px;color:#10203a;font-size:7.6px;">© roSoft, Roland Otter</div>
<div class="t" style="right:15.5px;text-align:right;top:586px;height:13px;line-height:13px;color:#10203a;"><u>www.rosoft.de</u></div>
<div style="left:612px;top:408.4px;width:156.60000000000002px;height:168.80000000000007px;background:rgba(10,12,20,0.6);filter:blur(0.9px);"></div>
<div style="left:610px;top:406.4px;width:156.60000000000002px;height:168.80000000000007px;background:#f9f9f9;border:1px solid #a8aebc;"></div>
<div style="left:611px;top:407.4px;width:16px;height:166.80000000000007px;background:linear-gradient(90deg,#e6eefb,#bcd0f2 60%,#8fb0e6);"></div>
<div class="t" style="left:631.7px;top:409px;height:13px;line-height:13px;font-size:7.53px;">Eintrag bearbeiten</div>
<div class="t" style="left:631.7px;top:424px;height:13px;line-height:13px;font-size:7.53px;">Neue Buchung...</div>
<div style="left:629.5px;top:440px;width:132.5px;height:1px;background:#b4b8c2;"></div>
<div class="t" style="left:631.7px;top:445px;height:13px;line-height:13px;font-size:7.53px;">Konto mit Gegenkonto tauschen</div>
<div style="left:629.5px;top:462px;width:132.5px;height:1px;background:#b4b8c2;"></div>
<div style="left:612px;top:465.26px;width:152.8px;height:13.819999999999999px;background:#fde8ad;border:1px solid #4a4a9a;"></div>
<div class="t" style="left:631.7px;top:467px;height:13px;line-height:13px;font-size:7.53px;">Beleg drucken</div>
<div class="t" style="left:631.7px;top:481px;height:13px;line-height:13px;font-size:7.53px;">Quittung <u>d</u>rucken</div>
<div class="t" style="left:631.7px;top:496px;height:13px;line-height:13px;font-size:7.53px;">Kontoauszug abrufen...</div>
<div style="left:629.5px;top:512px;width:132.5px;height:1px;background:#b4b8c2;"></div>
<div class="t" style="left:631.7px;top:517px;height:13px;line-height:13px;font-size:7.53px;">Nach diesem Inhalt filtern</div>
<div style="left:629.5px;top:534px;width:132.5px;height:1px;background:#b4b8c2;"></div>
<div class="t" style="left:631.7px;top:539px;height:13px;line-height:13px;font-size:7.53px;">Alles markieren</div>
<div style="left:629.5px;top:555px;width:132.5px;height:1px;background:#b4b8c2;"></div>
<div class="t" style="left:631.7px;top:560px;height:13px;line-height:13px;font-size:7.53px;">Summe Sammelbeleg</div>
<div class="t" style="left:468.9px;width:300px;text-align:center;top:559px;height:14px;line-height:14px;font-family:'Liberation Serif',serif;font-weight:bold;font-size:9.5px;color:#111;">Σ</div>
<svg style="left:0;top:0" width="984" height="610" viewBox="0 0 984 610"><defs>
<linearGradient id="gB" x1="0" y1="0" x2="0" y2="1"><stop offset="0" stop-color="#8ad6f7"/><stop offset="1" stop-color="#2596d6"/></linearGradient>
<linearGradient id="gR" x1="0" y1="0" x2="0" y2="1"><stop offset="0" stop-color="#f6ab8c"/><stop offset="1" stop-color="#de4a22"/></linearGradient>
<linearGradient id="gY" x1="0" y1="0" x2="0" y2="1"><stop offset="0" stop-color="#f7e58e"/><stop offset="1" stop-color="#e2bf2e"/></linearGradient>
<linearGradient id="gY2" x1="0" y1="0" x2="0" y2="1"><stop offset="0" stop-color="#fae07a"/><stop offset="1" stop-color="#f0b418"/></linearGradient>
<linearGradient id="gFold" x1="0" y1="0" x2="0" y2="1"><stop offset="0" stop-color="#fde9a6"/><stop offset="1" stop-color="#e9b030"/></linearGradient>
<linearGradient id="gGray" x1="0" y1="0" x2="0" y2="1"><stop offset="0" stop-color="#cfcfcf"/><stop offset="1" stop-color="#8e8e8e"/></linearGradient>
<linearGradient id="gX" x1="0" y1="0" x2="1" y2="1"><stop offset="0" stop-color="#f08a60"/><stop offset="0.5" stop-color="#e3552c"/><stop offset="1" stop-color="#cf3c18"/></linearGradient>
<linearGradient id="gGreen" x1="0" y1="0" x2="0" y2="1"><stop offset="0" stop-color="#b8dc38"/><stop offset="1" stop-color="#94c414"/></linearGradient>
<linearGradient id="gRef" x1="0" y1="0" x2="1" y2="0"><stop offset="0" stop-color="#1590d4"/><stop offset="1" stop-color="#6cc8ea"/></linearGradient>
<linearGradient id="gBrown" x1="0" y1="0" x2="0" y2="1"><stop offset="0" stop-color="#c56e22"/><stop offset="1" stop-color="#96420e"/></linearGradient>
<linearGradient id="gDoc" x1="0" y1="0" x2="1" y2="0"><stop offset="0" stop-color="#f6de7c"/><stop offset="0.4" stop-color="#fbeea2"/><stop offset="1" stop-color="#efcd58"/></linearGradient>
<linearGradient id="gCal" x1="0" y1="0" x2="0" y2="1"><stop offset="0" stop-color="#a4d33c"/><stop offset="1" stop-color="#6cae1c"/></linearGradient>
<filter id="bl" x="-20%" y="-20%" width="140%" height="140%"><feGaussianBlur stdDeviation="0.35"/></filter>
</defs><g>
<rect x="12" y="7.8" width="14.4" height="15.8" fill="#eaf3fb" opacity=".55" rx=".6"/>
<rect x="12.5" y="9" width="4.1" height="14.2" fill="#2b7fbe"/><rect x="12.7" y="8.2" width="1.4" height="1.4" fill="#2b7fbe"/>
<rect x="16.9" y="9" width="4.1" height="14.2" fill="#8fb62a"/><rect x="17.1" y="8.2" width="1.4" height="1.4" fill="#8fb62a"/>
<rect x="21.3" y="9" width="4.4" height="14.2" fill="#c54a30"/><rect x="21.5" y="8.2" width="1.4" height="1.4" fill="#c54a30"/>
<rect x="13.8" y="10.8" width="1.6" height="7.6" fill="#f4f6f8"/><rect x="18.2" y="10.8" width="1.6" height="7.6" fill="#f4f6f8"/><rect x="22.7" y="10.8" width="1.6" height="7.6" fill="#f4f6f8"/>
<circle cx="14.6" cy="20.6" r=".8" fill="#dfe9f2" opacity=".8"/><circle cx="19" cy="20.6" r=".8" fill="#e6efcf" opacity=".8"/><circle cx="23.5" cy="20.6" r=".8" fill="#f2d6cf" opacity=".8"/>
</g>
<g>
<path d="M27 31.4h5.6l1 1.2v2H27z" fill="#f0cf72"/>
<path d="M18 29.2q.2-.8 1-.8h6.4l3.6 3.4v3H17.6z" fill="#fbfbfb"/>
<path d="M19.5 30.5h5.5l2.8 2.6v1.5h-9z" fill="#e9e9e9" opacity=".7"/>
<path d="M14.2 33.2h7.2l1 .9h11.2v2H14.2z" fill="#3a3734"/>
<path d="M14 35.8h19.7v9.2q0 .9-.9.9H14.9q-.9 0-.9-.9z" fill="url(#gFold)"/>
<path d="M14 35.8h19.7v.8H14z" fill="#fff3c8" opacity=".8"/>
</g>
<path d="M41.3 36.2h6.6l-3.3 3.9z" fill="#0c0c0c"/>
<g>
<path d="M47 81.6l.9-2.6q.2-.5.8-.5h7.6q.6 0 .8.5l.9 2.6z" fill="#fcfcfc"/>
<rect x="43.8" y="81.3" width="28.5" height="18.2" rx=".8" fill="#b9b9b9" opacity=".55"/>
<rect x="44.1" y="81.3" width="27.9" height="17.6" rx=".6" fill="#fafafa"/>
<rect x="45" y="82.1" width="25.3" height="2.8" fill="#169edb"/>
<circle cx="50" cy="87.3" r="1.75" fill="#f0a98a"/>
<path d="M46.9 96.2v-4.6q0-1.9 1.9-2h2.6q1.9.1 1.9 2v4.6z" fill="#8c8c8c"/>
<path d="M49.3 89.6h1.6l.6 5.4-1.4 1.2-1.4-1.2z" fill="#8fd048"/>
<rect x="56" y="86.2" width="4.6" height=".8" fill="#8a8a8a"/><rect x="56" y="88.2" width="10.6" height="1" fill="#c4c4c4"/>
<rect x="56" y="90.9" width="2" height=".8" fill="#8a8a8a"/><rect x="56" y="93" width="7.6" height="1" fill="#9a9a9a"/><rect x="56" y="95.2" width="6.2" height="1" fill="#c0c0c0"/>
</g>
<g>
<rect x="42.8" y="127.8" width="27.4" height="18.4" fill="#fbfaf6"/>
<rect x="42.8" y="127.8" width="27.4" height="4" fill="#f1a183"/>
<rect x="44.5" y="128.3" width="10" height="1.2" fill="#fbe3d8" opacity=".8"/><rect x="56" y="128.2" width="3.6" height="1.4" fill="#fff" opacity=".9"/><rect x="61" y="128.3" width="8" height="1.2" fill="#fbe3d8" opacity=".8"/>
<rect x="42.8" y="131.8" width="27.4" height="11.2" fill="#f3cd6c"/>
<rect x="51" y="131.8" width="1.2" height="11.2" fill="#eec056"/>
<rect x="44.4" y="133.0" width="1.7" height="1.7" fill="#fdf6e4"/><rect x="48.0" y="133.0" width="1.7" height="1.7" fill="#fdf6e4"/><rect x="53.1" y="133.0" width="1.7" height="1.7" fill="#fdf6e4"/><rect x="56.7" y="133.0" width="1.7" height="1.7" fill="#fdf6e4"/><rect x="60.2" y="133.0" width="1.7" height="1.7" fill="#fdf6e4"/><rect x="63.9" y="133.0" width="1.7" height="1.7" fill="#fdf6e4"/><rect x="67.5" y="133.0" width="1.7" height="1.7" fill="#fdf6e4"/><rect x="44.4" y="136.3" width="1.7" height="1.7" fill="#fdf6e4"/><rect x="48.0" y="136.3" width="1.7" height="1.7" fill="#fdf6e4"/><rect x="53.1" y="136.3" width="1.7" height="1.7" fill="#fdf6e4"/><rect x="56.7" y="136.3" width="1.7" height="1.7" fill="#fdf6e4"/><rect x="60.2" y="136.3" width="1.7" height="1.7" fill="#fdf6e4"/><rect x="63.9" y="136.3" width="1.7" height="1.7" fill="#fdf6e4"/><rect x="67.5" y="136.3" width="1.7" height="1.7" fill="#fdf6e4"/><rect x="44.4" y="139.7" width="1.7" height="1.7" fill="#fdf6e4"/><rect x="48.0" y="139.7" width="1.7" height="1.7" fill="#fdf6e4"/><rect x="53.1" y="139.7" width="1.7" height="1.7" fill="#fdf6e4"/><rect x="56.7" y="139.7" width="1.7" height="1.7" fill="#fdf6e4"/><rect x="60.2" y="139.7" width="1.7" height="1.7" fill="#fdf6e4"/><rect x="63.9" y="139.7" width="1.7" height="1.7" fill="#fdf6e4"/><rect x="67.5" y="139.7" width="1.7" height="1.7" fill="#fdf6e4"/>
<rect x="44.2" y="144" width="6.8" height="1" fill="#8a8a8a"/>
<rect x="56.3" y="141.4" width="17" height="15.4" rx="1" fill="#a8a8a8" opacity=".45"/>
<rect x="56" y="141" width="17" height="15.4" rx=".9" fill="#fbfbfb"/>
<path d="M56 146v-4.2q0-.9.9-.9h15.2q.9 0 .9.900V146z" fill="url(#gCal)"/>
<rect x="59.6" y="143" width="9" height="1.3" fill="#e3f3c4" opacity=".85"/>
<text x="64.4" y="154.4" text-anchor="middle" font-family="'Liberation Sans',sans-serif" font-weight="bold" font-size="8.2" fill="#111">15</text>
</g>
<g>
<rect x="43" y="186" width="8.9" height="23" rx="1.3" fill="url(#gB)" stroke="#3a9bd3" stroke-width=".4"/>
<rect x="53.6" y="191.3" width="8.3" height="17.7" rx="1.3" fill="url(#gR)" stroke="#dc5a32" stroke-width=".4"/>
<rect x="63.4" y="181.9" width="8.7" height="27.1" rx="1.3" fill="url(#gY)" stroke="#dcbc3c" stroke-width=".4"/>
</g>
<g>
<rect x="133.3" y="77.3" width="16.8" height="13.4" fill="#f1f2f2" stroke="#a9622e" stroke-width=".9"/>
<rect x="141" y="77.8" width=".7" height="12.4" fill="#c9c9c9"/>
<rect x="134.4" y="80.8" width="14.6" height=".5" fill="#d4d4d4"/>
<circle cx="147.5" cy="91.8" r="5.5" fill="url(#gGreen)"/>
<path d="M144.4 91.1h2.4v-2.4h1.4v2.400h2.4v1.4h-2.4v2.4h-1.4v-2.400h-2.400z" fill="#fff"/>
</g>
<path d="M175.8 91.7h3.2l-1.600 2z" fill="#111"/>
<path d="M194 78.900l5.700 5.600 5.700-5.600 2.400 2.400-5.700 5.600 5.700 5.600-2.400 2.400-5.700-5.600-5.700 5.600-2.400-2.400 5.700-5.600-5.700-5.600z" fill="url(#gX)" stroke="#e0522a" stroke-width="1.3" stroke-linejoin="round"/>
<g>
<rect x="236" y="79.2" width="19.400" height="15.400" rx=".8" fill="#f8f8f6"/>
<path d="M236 83v-3q0-.8.8-.8h17.800q.8 0 .8.800v3z" fill="#2a9cd8"/>
<rect x="236" y="79.2" width="19.4" height="1" fill="#5cbcea"/>
<g stroke="#d8d8d2" stroke-width=".4"><path d="M236 86h19.400M236 88.900h19.400M236 91.800h19.400M240.800 83v11.600M251.800 83v11.600"/></g>
<rect x="245.800" y="83" width="3.100" height="11.600" fill="#f0601e"/>
<path d="M245.400 90v1.400h-2.400v1.300l-2.800-2 2.800-2v1.300z" fill="#2a9cd8"/>
<path d="M249.300 89v-1.400h2.400v-1.300l2.800 2-2.800 2v-1.300z" fill="#2a9cd8"/>
<rect x="236" y="93.800" width="19.400" height=".8" fill="#cfcfc8"/>
</g>
<g>
<path d="M312.200 81.600v-1.200q0-.8.800-.8h4q.8 0 .8.800v1.200z" fill="#eeeeee"/>
<rect x="307.900" y="81.100" width="19.800" height="13.300" rx="1.800" fill="url(#gGray)"/>
<rect x="308.600" y="82" width="18.400" height="1" fill="#dcdcdc" opacity=".7"/>
</g>
<g>
<path d="M375 88.300l-5.400 5.300" stroke="#8b8b8b" stroke-width="2.600" stroke-linecap="round"/>
<path d="M374.800 88.500l-5 4.900" stroke="#e4e4e4" stroke-width="1.200" stroke-linecap="round"/>
<circle cx="379.800" cy="83.400" r="6" fill="#e2e2e2" stroke="#1b9be0" stroke-width="2"/>
<path d="M375.600 82.600a4.300 4.300 0 0 1 8.400 0z" fill="#f6f6f6"/>
<path d="M380.800 85.800h2v-1h.8v1h1.400v-1h.800v1h2q1.200 2.600 1.200 5.200h-1v3.800h1v2h-3.800v-2h.8v-3.800h-2.400v3.800h.8v2h-3.800v-2h1v-3.800h-1q0-2.600 1.200-5.200z" fill="#2e2e2e"/>
<rect x="382.400" y="87" width="1" height="4" fill="#6a6a6a"/><rect x="385.800" y="87" width="1" height="4" fill="#6a6a6a"/>
</g>
<g>
<path d="M423 80.200q8.500-2.400 17 0-.4 1.600-1.400 2.200l-6.100 5.400v8.600q-1.200 1.400-2.500 0v-8.600l-6-5.400q-.8-.8-1-2.200z" fill="#c9c9c9"/>
<path d="M423.200 80.400q8.400 2.600 16.600 0-.2 1.400-1 2-7.400 1.800-14.600 0-.8-.8-1-2z" fill="#a9a9a9"/>
<path d="M430.200 88h1.200v8h-1.200z" fill="#ececec"/>
<circle cx="427.400" cy="78.800" r="1.500" fill="#b8b8b8"/>
<circle cx="432.900" cy="78.500" r="2" fill="#6c6c6c"/>
<circle cx="426.500" cy="94.800" r="1.800" fill="#7e7e7e"/>
<circle cx="437.700" cy="91.600" r="5.300" fill="#8b8b8b"/>
<path d="M435 90l1.100-1.100 1.600 1.600 1.600-1.600 1.100 1.100-1.600 1.600 1.600 1.600-1.100 1.100-1.600-1.600-1.600 1.600-1.100-1.100 1.600-1.600z" fill="#fff"/>
</g>
<g transform="translate(497.800 87)"><path d="M-8.9-1.500C-8.800-7.200-4.200-9.400 2.200-7.900L2.600-10 8.900-2.800-2.400-.9-.3-3.500C-3.400-4-6.300-3.200-8.900-1.500Z" fill="url(#gRef)"/><path d="M-8.9-1.500C-8.800-7.200-4.200-9.400 2.200-7.900L2.600-10 8.900-2.800-2.400-.9-.3-3.500C-3.400-4-6.300-3.200-8.900-1.500Z" fill="url(#gRef)" transform="rotate(180)"/></g>
<g>
<rect x="551" y="82" width="12.200" height="4" fill="#4a4a4a"/>
<path d="M552.400 85.400l.6-6.200h8.200l.8 6.200z" fill="#f6f6f6"/>
<rect x="547.200" y="85.200" width="19.200" height="9.600" rx="1.600" fill="url(#gGray)"/>
<rect x="547.200" y="85.200" width="19.200" height="2.200" rx="1" fill="#d9d9d9"/>
<rect x="550.600" y="87.600" width="12.600" height="1.500" fill="#5a5a5a"/>
<rect x="551.400" y="91" width="11" height="1.300" rx=".6" fill="#3c3c3c"/>
<circle cx="548.800" cy="87.200" r=".8" fill="#f2f2f2"/><circle cx="564.800" cy="87.200" r=".8" fill="#f2f2f2"/>
</g>
<g>
<rect x="594" y="77.500" width="18.200" height="18.700" rx="1.600" fill="url(#gBrown)"/>
<rect x="596.700" y="80.100" width="13.100" height="13.400" fill="#f6f6f4"/>
<rect x="600.600" y="82.200" width="5.600" height=".7" fill="#777"/>
<rect x="598" y="84.500" width="10.500" height="1.100" fill="#555"/>
<rect x="602.500" y="84.500" width="1.500" height="7.500" fill="#555"/>
<g stroke="#e2e2de" stroke-width=".3"><path d="M597 87.500h12.500M597 89.500h12.500M597 91.500h12.500"/></g>
</g>
<g>
<rect x="645" y="77" width="9.300" height="16.800" fill="#e8eef2"/>
<rect x="645" y="77" width="9.300" height="1.700" fill="#a6a6a6"/>
<rect x="645.600" y="79.8" width="8" height="3.300" fill="#2b93d4"/><rect x="647.5" y="79.8" width=".6" height="3.300" fill="#bfe0f4"/><rect x="650.3" y="79.8" width=".6" height="3.300" fill="#bfe0f4"/><rect x="653" y="79.8" width=".6" height="3.300" fill="#bfe0f4"/><rect x="645.600" y="84.2" width="8" height="3.300" fill="#2b93d4"/><rect x="647.5" y="84.2" width=".6" height="3.300" fill="#bfe0f4"/><rect x="650.3" y="84.2" width=".6" height="3.300" fill="#bfe0f4"/><rect x="653" y="84.2" width=".6" height="3.300" fill="#bfe0f4"/><rect x="645.600" y="88.6" width="8" height="3.300" fill="#2b93d4"/><rect x="647.5" y="88.6" width=".6" height="3.300" fill="#bfe0f4"/><rect x="650.3" y="88.6" width=".6" height="3.300" fill="#bfe0f4"/><rect x="653" y="88.6" width=".6" height="3.300" fill="#bfe0f4"/>
<rect x="644.400" y="93.200" width="10.500" height=".8" fill="#8c8c8c"/>
<path d="M655 86.200l6-1.600 1.200 8.200-6 1.800z" fill="#eadcc0"/>
<path d="M650 89.400l6.400-3 2.600 7.600-6.200 2.400z" fill="#f6efe2"/>
<path d="M651.200 91l4.200-1.800" stroke="#8a8ea4" stroke-width=".7"/>
<path d="M659 90.500l2 .2.400 5-1.800.4z" fill="#cfe3ee"/>
<ellipse cx="656.100" cy="94.400" rx="3.300" ry="2.300" fill="#f4d648"/>
<ellipse cx="656.100" cy="93.900" rx="2.300" ry="1.300" fill="#f9e67c"/>
</g>
<g>
<rect x="696.200" y="84.400" width="5.700" height="11.600" rx=".9" fill="url(#gB)"/>
<rect x="703.200" y="81.100" width="5.200" height="14.900" rx=".9" fill="url(#gY2)"/>
<rect x="709.900" y="78.900" width="5.200" height="17.100" rx=".9" fill="url(#gR)"/>
</g>
<g>
<rect x="953.600" y="88.300" width="2.500" height="7.200" rx=".8" fill="#f3dc84" stroke="#e0bc48" stroke-width=".4"/>
<rect x="954.400" y="89.600" width=".9" height="4.600" fill="#fff"/><rect x="954.400" y="93.200" width=".9" height="1" fill="#4aa2e0"/>
<rect x="939.500" y="79.100" width="14.500" height="17.800" rx=".7" fill="url(#gDoc)" stroke="#e3bf52" stroke-width=".5"/>
<path d="M941.200 77.200q1.600 3.600 6.200 3.600l-.2-2.300 4.900 3.700-3.900 3.500-.3-2.300q-5 .2-6.700-6.200z" fill="#1b8fdc"/>
<path d="M947.400 80.800l-.2-2.300 4.900 3.700-2 1.800q-.5-2.500-2.700-3.200z" fill="#4ab4ee"/>
</g>
<g>
<rect x="614.500" y="411.500" width="7" height="8.500" fill="#f4f7fb" stroke="#5a78b4" stroke-width=".6"/>
<rect x="614.800" y="411.800" width="6.400" height="1.500" fill="#6f9be0"/>
<rect x="616" y="414.500" width=".8" height="4" fill="#8aa0c8"/><rect x="617.600" y="414.500" width=".8" height="4" fill="#8aa0c8"/><rect x="619.200" y="414.500" width=".8" height="4" fill="#8aa0c8"/>
<path d="M622.600 410.200l-3.800 6.400" stroke="#1a1a1a" stroke-width="1.700"/>
<path d="M622.200 411.200l-2.600 4.400" stroke="#e8c030" stroke-width=".8"/>
<rect x="616.200" y="427" width="8" height="6.600" fill="#f4f7fb" stroke="#7c97c8" stroke-width=".5"/>
<rect x="616.200" y="427" width="8" height="1.500" fill="#5b93e4"/>
<rect x="618" y="429.600" width="1.200" height="3" fill="#b4c2dc"/><rect x="620" y="429.600" width="1.200" height="3" fill="#b4c2dc"/><rect x="622" y="429.600" width="1.200" height="3" fill="#b4c2dc"/>
<path d="M613.600 430.300l2.600-2v1.200h2.200v1.600h-2.200v1.200z" fill="#4aa83a"/>
<rect x="618.200" y="447.200" width=".8" height="8.400" fill="#8c9cb8"/>
<rect x="614" y="447.600" width="9" height=".7" fill="#a8b4c8" opacity=".8"/>
<path d="M615 449.400h1.800" stroke="#e05030" stroke-width=".8"/><path d="M621 449.200h2" stroke="#58a848" stroke-width=".8"/>
<path d="M616.400 450.600h4.400v-1l2.400 1.700-2.400 1.700v-1h-4.400z" fill="#e8452c"/>
<path d="M618 454h-1.600v1l-2.400-1.700 2.400-1.700v1h1.600z" fill="#4a9a3c"/>
<path d="M614 519.400h6.400l-2.600 3.400v3.800l-1.200.9v-4.700z" fill="#f2f2f2" stroke="#555" stroke-width=".6" stroke-linejoin="round"/>
<path d="M613.600 528.200h3.400" stroke="#6a7a98" stroke-width=".6"/>
<path d="M623.900 522.500l-5.200 5" stroke="#e4b428" stroke-width="1.700"/>
<path d="M624.300 522.100l-.9.900" stroke="#e8808a" stroke-width="1.800"/>
<path d="M618.900 527.300l-.7.700" stroke="#3a3a3a" stroke-width="1.100"/>
</g>
<g>
<path d="M117.500 232.600h5.600l-2.300 3v3.300l-1 .8v-4.100z" fill="#f4f4f4" stroke="#555" stroke-width=".55" stroke-linejoin="round"/>
<path d="M117 241h3.200" stroke="#5a6a88" stroke-width=".6"/>
<path d="M126.600 235.400l-4.800 4.600" stroke="#e4b428" stroke-width="1.600"/>
<path d="M127 235l-.8.800" stroke="#e8808a" stroke-width="1.700"/>
<path d="M122 239.800l-.6.600" stroke="#3a3a3a" stroke-width="1"/>
</g></svg>
</body></html>
